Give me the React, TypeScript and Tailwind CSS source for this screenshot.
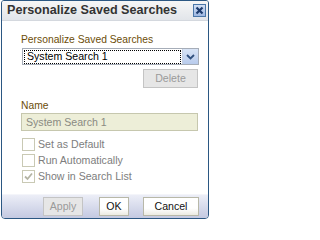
import React from 'react';

const Check: React.FC<{ label: string; checked?: boolean }> = ({ label, checked }) => (
  <div className="h-[16px] flex items-center">
    <span className="ml-px w-[13px] h-[13px] border border-[#c9c9b4] bg-white flex items-center justify-center">
      {checked && (
        <svg width="9" height="9" viewBox="0 0 9 9">
          <path d="M1 4.5 L3.5 7 L8 1.5" fill="none" stroke="#b4b4a4" strokeWidth="1.8" />
        </svg>
      )}
    </span>
    <span className="ml-[3px] text-[10.6px] leading-[13px] text-[#7d7d7d]">{label}</span>
  </div>
);

const Btn: React.FC<{ label: string; disabled?: boolean; className?: string }> = ({ label, disabled, className }) => (
  <div
    className={
      disabled
        ? `h-[19px] border border-[#c4c4c4] bg-[#e6e6e6] text-[#9a9a9a] text-[10.6px] flex items-center justify-center ${className}`
        : `h-[19px] border border-[#b8b8a8] bg-gradient-to-b from-white from-60% to-[#ecebe2] text-[#111] text-[10.6px] flex items-center justify-center ${className}`
    }
  >
    {label}
  </div>
);

export default function App() {
  return (
    <div className="w-[210px] h-[220px] bg-white font-['Liberation_Sans',Arial,sans-serif]">
      <div className="ml-px w-[208px] h-[219px] border border-[#2b5782] rounded-t-[3px] rounded-b-[4px] flex flex-col overflow-hidden">
        {/* title bar */}
        <div className="h-[20px] shrink-0 flex items-center border-b border-[#d4d8de] bg-gradient-to-b from-[#f6f6f6] to-[#e2e5ea]">
          <span className="ml-[5px] text-[12.6px] font-bold text-[#333]">Personalize Saved Searches</span>
          <div className="ml-auto mr-[2px] w-[13px] h-[13px] border border-[#4b77a8] bg-gradient-to-b from-[#d3e0f4] to-[#9db7e2] flex items-center justify-center">
            <svg width="9" height="9" viewBox="0 0 9 9">
              <path d="M1.5 1.5 L7.5 7.5 M7.5 1.5 L1.5 7.5" stroke="#1d3b6d" strokeWidth="2.2" />
            </svg>
          </div>
        </div>

        {/* body */}
        <div className="flex-1 bg-white pl-[19px]">
          <div className="mt-[12px] text-[10.3px] leading-[13px] text-[#6c4d08]">Personalize Saved Searches</div>
          <div className="mt-[2px] ml-px w-[177px] h-[17px] border border-[#a6adb8] flex items-center bg-white">
            <div className="ml-px h-[14px] flex-1 border border-dotted border-black flex items-center">
              <span className="ml-[2px] text-[10.6px] leading-[13px] text-black">System Search 1</span>
            </div>
            <div className="ml-px w-[16px] h-[15px] bg-gradient-to-b from-[#d8e4f6] to-[#b8cbec] border-l border-[#c5d0e2] flex items-center justify-center">
              <svg width="9" height="6" viewBox="0 0 9 6">
                <path d="M1 1 L4.5 4.5 L8 1" fill="none" stroke="#30507e" strokeWidth="1.8" />
              </svg>
            </div>
          </div>
          <div className="mt-[4px] flex">
            <Btn label="Delete" disabled className="ml-[122px] w-[55px]" />
          </div>

          <div className="mt-[11px] text-[10.3px] leading-[13px] text-[#6c4d08]">Name</div>
          <div className="mt-px w-[177px] h-[18px] border border-[#c6c7ae] bg-[#edeed8] flex items-center">
            <span className="ml-[4px] text-[10.6px] leading-[13px] text-[#8a8a82]">System Search 1</span>
          </div>

          <div className="mt-[5px]">
            <Check label="Set as Default" />
            <Check label="Run Automatically" />
            <Check label="Show in Search List" checked />
          </div>
        </div>

        {/* footer */}
        <div className="h-[24px] shrink-0 border-t border-[#f4f5fa] bg-gradient-to-b from-[#eceef7] to-[#c4c9e1] flex pt-[2px]">
          <Btn label="Apply" disabled className="ml-[41px] w-[40px]" />
          <Btn label="OK" className="ml-[16px] w-[30px]" />
          <Btn label="Cancel" className="ml-[14px] w-[56px]" />
        </div>
      </div>
    </div>
  );
}
